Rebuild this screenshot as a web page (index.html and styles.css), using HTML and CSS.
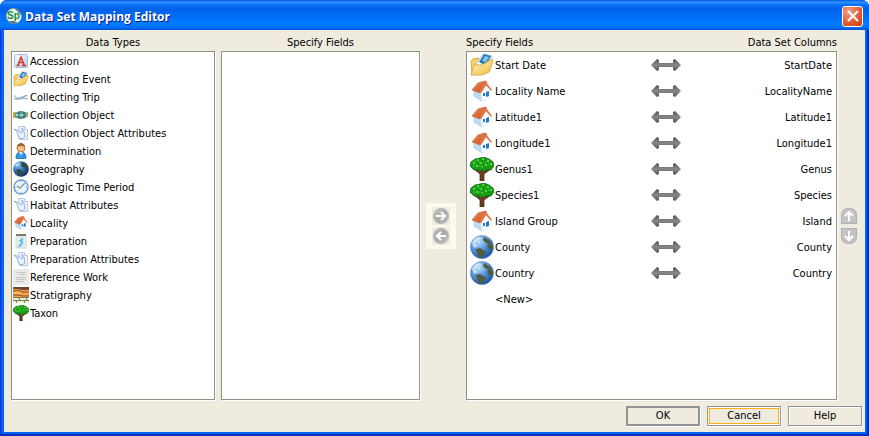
FILE: index.html
```html
<!DOCTYPE html>
<html lang="en">
<head>
<meta charset="utf-8">
<title>Data Set Mapping Editor</title>
<link rel="stylesheet" href="styles.css">
</head>
<body>
<svg class="sprite" aria-hidden="true">
  <defs>
    <linearGradient id="gMetal" x1="0" y1="0" x2="0" y2="1"><stop offset="0" stop-color="#555"/><stop offset=".5" stop-color="#888"/><stop offset="1" stop-color="#555"/></linearGradient>
    <linearGradient id="gRound" x1="0" y1="0" x2="1" y2="1"><stop offset="0" stop-color="#c8c8c8"/><stop offset=".5" stop-color="#aaaaac"/><stop offset="1" stop-color="#bcbcbc"/></linearGradient>
    <linearGradient id="gFolder" x1="0" y1="0" x2="1" y2="1"><stop offset="0" stop-color="#fff6b8"/><stop offset="1" stop-color="#f0bc45"/></linearGradient>
    <linearGradient id="gPage" x1="0" y1="0" x2="1" y2="1"><stop offset="0" stop-color="#fff"/><stop offset="1" stop-color="#aac8f0"/></linearGradient>
    <radialGradient id="gGlobe" cx=".35" cy=".25" r=".8"><stop offset="0" stop-color="#c4e2f8"/><stop offset=".45" stop-color="#5b9be0"/><stop offset="1" stop-color="#184a98"/></radialGradient>
    <radialGradient id="gDark" cx=".3" cy=".25" r=".8"><stop offset="0" stop-color="#8cc0ee"/><stop offset=".5" stop-color="#3272b8"/><stop offset="1" stop-color="#102c5c"/></radialGradient>
    <linearGradient id="gRoof" x1="0" y1="0" x2="1" y2="1"><stop offset="0" stop-color="#ee8a58"/><stop offset="1" stop-color="#c84c1c"/></linearGradient>
  </defs>
  <symbol id="accession" viewBox="0 0 16 16"><rect x="1.500" y="1.500" width="13" height="13" rx="1" fill="url(#gPage)" stroke="#a4c0e8"/><path d="M3.500 12.500h3M9 12.500h4M5 12.200L8 4l3.200 8M6.200 9.500h4" stroke="#d8381c" stroke-width="1.500" fill="none"/></symbol>
  <symbol id="event" viewBox="0 0 24 24"><path d="M1 8l2-2 5-1 3 2v9l-9 5z" fill="#f6cf68" stroke="#d8ac50"/><path d="M6 11l7-10 9 2-5 12-9 3z" fill="#fff" stroke="#9cb0c4" stroke-width=".7"/><path d="M9 9l5-8 7 2-5 10z" fill="#2878b8"/><path d="M12 8l3-5 4 1-3 5z" fill="#7cc8ec"/><path d="M1 22l3-10 8 0 10-6 1 2-4 11-7 3z" fill="url(#gFolder)" stroke="#d8ac50"/></symbol>
  <symbol id="trip" viewBox="0 0 16 16"><path d="M0 7l2-1 3 3 4-1 5-2 1 1-4 2 4 1h-5l-3 1H2l2-2-2-1z" fill="#b4c8e0"/><path d="M1 10l5-1 8-3M8 9l7 1" stroke="#8ea8c6" fill="none"/></symbol>
  <symbol id="object" viewBox="0 0 16 16"><path d="M0 5h3v6H0z" fill="#d4ac48"/><ellipse cx="8" cy="8" rx="6" ry="4" fill="#4c9098"/><path d="M2 7q5-5 10-1l3-1v5l-3-1q-5 4-10 1z" fill="#5a9a8c"/><path d="M3 7h8v2H3z" fill="#9ed8c8"/><path d="M6 5v6M11 5v6" stroke="#284c78"/><path d="M14 5v5" stroke="#d4ac48"/></symbol>
  <symbol id="attrs" viewBox="0 0 16 16"><path d="M5.500 1.500h6l3 3v10h-8z" fill="#eef5ff" stroke="#b8cae4"/><path d="M11.500 1.500v3h3" fill="#fff" stroke="#b8cae4"/><path d="M1 4l3 3 2 6 3 1 3-2-1-6-2-3v5L4 5z" fill="#e8f0fb" stroke="#9ab2d6"/></symbol>
  <symbol id="person" viewBox="0 0 16 16"><path d="M3 15q0-6 5-6t5 6q-5 2-10 0z" fill="#3a96e0" stroke="#1870b8"/><path d="M6 9l2 3 2-3z" fill="#fff"/><circle cx="8" cy="5" r="4" fill="#f8c088" stroke="#b87838"/><path d="M4 4q1-4 4-4t4 4Q8 2 4 4z" fill="#a4602c"/></symbol>
  <symbol id="earth" viewBox="0 0 16 16"><circle cx="8" cy="8" r="7.800" fill="url(#gDark)"/><path d="M9 1l4 2 2 4-2 1-2-2H9l-1-3zM3 9l3-1 4 3-2 4H6l-1-3z" fill="#344838"/><path d="M2 4l3-2 2 1-4 3z" fill="#b8dcf4"/></symbol>
  <symbol id="clock" viewBox="0 0 16 16"><circle cx="8" cy="8" r="7" fill="#e8f4ff" stroke="#6c9ed4" stroke-width="1.400"/><path d="M8 2v1M8 13v1M2 8h1M13 8h1" stroke="#7ca8d8"/><path d="M12 4L7 9 4 7" fill="none" stroke="#7090b8" stroke-width="1.200"/><circle cx="7" cy="9" r="1" fill="#e88c50"/></symbol>
  <symbol id="house" viewBox="0 0 24 24"><path d="M4 11l7 2 6-7 3 5v7l-8 4-8-5z" fill="#bcdcf4" stroke="#a8c8e0" stroke-width=".7"/><path d="M11 14l5-7 5 4v7l-9 4z" fill="#f8fcff"/><path d="M13 14h2v3h-2zM16 13l3-1v5l-3 1z" fill="#2878c0"/><path d="M2 11L8 4l7-2 2 1-7 11z" fill="url(#gRoof)" stroke="#c86838" stroke-width=".7"/><path d="M14 3h2l6 8-1 1-5-6-5 8-2 0z" fill="#e07444"/></symbol>
  <symbol id="jar" viewBox="0 0 16 16"><path d="M3 3h10v12H3z" fill="#e7eeee" stroke="#d4dada"/><path d="M3 1h10v2H3z" fill="#747c74"/><path d="M10 5L6 8l3 1-4 5 3-1 2-4-1-1z" fill="#62c8ec" stroke="#62c4e8"/></symbol>
  <symbol id="paper" viewBox="0 0 16 16"><path d="M0 0h16v16H0z" fill="#eaeaea"/><path d="M3 3.500h2M6 3.500h7M6 5.500h7M3 8.500h10M3 10.500h10M3 12.500h8" stroke="#c6c6c6"/></symbol>
  <symbol id="strata" viewBox="0 0 16 16"><path d="M0 0h16v16H0z" fill="#f3a04c"/><path d="M0 0h16v3H9L5 2H0z" fill="#6c4834"/><path d="M0 4l5-1 4 2h7M0 8h5l5 1h6" stroke="#905028" fill="none"/><path d="M0 10h16v6H0z" fill="#f0eed0"/><path d="M0 10.500h16M0 13.500h16M3.500 13v3M11.500 13v3M6.500 10v3M13.500 10v3" stroke="#708058"/><path d="M0 6h8" stroke="#ffd060"/></symbol>
  <symbol id="tree" viewBox="0 0 24 24"><path d="M4 12l6 5v7h4v-7l7-5-1-1-7 4-1-4-1 4-5-4z" fill="#70401c" stroke="#38200c" stroke-width=".7"/><path d="M0 9l1-4 4-3 5-1 4-1 5 2 4 3 1 4-3 4-4 0-4 1-4-1-5 0z" fill="#189c18" stroke="#075807" stroke-width=".7"/><path d="M3 6h2M7 3h2M12 2h2M17 4h2M10 6h2M15 8h2M20 7h2M6 9h2M12 10h1" stroke="#50d83c" stroke-width="2"/><path d="M5 4h1M9 5h2M15 5h1M18 7h1M3 9h2M9 9h2" stroke="#30b828" stroke-width="2"/></symbol>
  <symbol id="globe" viewBox="0 0 24 24"><circle cx="12" cy="12" r="11.600" fill="url(#gGlobe)" stroke="#6890b8" stroke-width=".6"/><path d="M14 2l6 4 3 6-2 3-3-2-1-3 2-1-4-2-2-2zM6 14l4-1 6 4-4 5-2 1-3-5z" fill="#535c38"/><path d="M2 8q2-5 7-6l3 2-5 1-2 4 3 2-4 2z" fill="#e0f0fa" opacity=".7"/></symbol>
  <symbol id="both" viewBox="0 0 30 14"><path d="M0 7l6-6 2 1v3h14V2l2-1 6 6-6 6-2-1V9H8v3l-2 1z" fill="url(#gMetal)"/></symbol>
  <symbol id="right" viewBox="0 0 18 18"><circle cx="9" cy="9" r="7.700" fill="url(#gRound)" stroke="#b0b0b0" stroke-width=".6"/><path d="M4 9h9M9 5l4 4-4 4" fill="none" stroke="#fff" stroke-width="2"/></symbol>
  <symbol id="up" viewBox="0 0 16 16"><path d="M0 16V8q0-8 8-8t8 8v8z" fill="#b0b0b2"/><path d="M1 15V8q0-7 7-7t7 7v7z" fill="#c4c4c6"/><path d="M8 13V5M4 8l4-4 4 4" fill="none" stroke="#fff" stroke-width="2"/></symbol>
</svg>
<div class="window">
  <header class="titlebar">
    <svg class="logo" viewBox="0 0 16 16" aria-hidden="true"><circle cx="8" cy="8" r="7.700" fill="#eef4ee" stroke="#789888" stroke-width=".7"/><path d="M8 0q8 0 8 8l-3-3zM2 13l5 3 5-1-4-2z" fill="#4c7894"/><text x="1" y="11" class="logo-text">Sp</text></svg>
    <h1>Data Set Mapping Editor</h1>
    <button class="close" aria-label="Close"><svg viewBox="0 0 12 12"><path d="M1 1l10 10M11 1L1 11" stroke="#fff" stroke-width="2"/></svg></button>
  </header>
  <main class="content">
    <div class="panes">
      <section class="pane types">
        <h2>Data Types</h2>
        <ul class="list">
          <li><svg><use href="#accession"/></svg>Accession</li>
          <li><svg><use href="#event"/></svg>Collecting Event</li>
          <li><svg><use href="#trip"/></svg>Collecting Trip</li>
          <li><svg><use href="#object"/></svg>Collection Object</li>
          <li><svg><use href="#attrs"/></svg>Collection Object Attributes</li>
          <li><svg><use href="#person"/></svg>Determination</li>
          <li><svg><use href="#earth"/></svg>Geography</li>
          <li><svg><use href="#clock"/></svg>Geologic Time Period</li>
          <li><svg><use href="#attrs"/></svg>Habitat Attributes</li>
          <li><svg><use href="#house"/></svg>Locality</li>
          <li><svg><use href="#jar"/></svg>Preparation</li>
          <li><svg><use href="#attrs"/></svg>Preparation Attributes</li>
          <li><svg><use href="#paper"/></svg>Reference Work</li>
          <li><svg><use href="#strata"/></svg>Stratigraphy</li>
          <li><svg><use href="#tree"/></svg>Taxon</li>
        </ul>
      </section>
      <section class="pane fields">
        <h2>Specify Fields</h2>
        <ul class="list"></ul>
      </section>
      <div class="movers">
        <button aria-label="Map field"><svg><use href="#right"/></svg></button>
        <button aria-label="Unmap field" class="back"><svg><use href="#right"/></svg></button>
      </div>
      <section class="pane mapping">
        <div class="heads"><h2>Specify Fields</h2><h2>Data Set Columns</h2></div>
        <div class="list">
          <table>
            <colgroup><col class="col-field"><col class="col-arrow"><col></colgroup>
            <tr><td><span><svg><use href="#event"/></svg>Start Date</span></td><td><svg class="both"><use href="#both"/></svg></td><td>StartDate</td></tr>
            <tr><td><span><svg><use href="#house"/></svg>Locality Name</span></td><td><svg class="both"><use href="#both"/></svg></td><td>LocalityName</td></tr>
            <tr><td><span><svg><use href="#house"/></svg>Latitude1</span></td><td><svg class="both"><use href="#both"/></svg></td><td>Latitude1</td></tr>
            <tr><td><span><svg><use href="#house"/></svg>Longitude1</span></td><td><svg class="both"><use href="#both"/></svg></td><td>Longitude1</td></tr>
            <tr><td><span><svg><use href="#tree"/></svg>Genus1</span></td><td><svg class="both"><use href="#both"/></svg></td><td>Genus</td></tr>
            <tr><td><span><svg><use href="#tree"/></svg>Species1</span></td><td><svg class="both"><use href="#both"/></svg></td><td>Species</td></tr>
            <tr><td><span><svg><use href="#house"/></svg>Island Group</span></td><td><svg class="both"><use href="#both"/></svg></td><td>Island</td></tr>
            <tr><td><span><svg><use href="#globe"/></svg>County</span></td><td><svg class="both"><use href="#both"/></svg></td><td>County</td></tr>
            <tr><td><span><svg><use href="#globe"/></svg>Country</span></td><td><svg class="both"><use href="#both"/></svg></td><td>Country</td></tr>
            <tr><td><span><svg></svg>&lt;New&gt;</span></td><td></td><td></td></tr>
          </table>
        </div>
      </section>
      <div class="order">
        <button aria-label="Move up"><svg><use href="#up"/></svg></button>
        <button aria-label="Move down" class="down"><svg><use href="#up"/></svg></button>
      </div>
    </div>
    <footer class="actions">
      <button class="default">OK</button>
      <button class="focused">Cancel</button>
      <button>Help</button>
    </footer>
  </main>
</div>
</body>
</html>
```
FILE: styles.css
```css
* { box-sizing: border-box; }
body {
  margin: 0;
  background: #fff;
  color: #000;
  font: 11px/14px "DejaVu Sans Condensed", "Liberation Sans", sans-serif;
}
button { font: inherit; color: inherit; padding: 0; border: 0; background: none; }
svg { display: block; flex: none; }
h1, h2, ul { margin: 0; padding: 0; font: inherit; }
.sprite { position: absolute; width: 0; height: 0; }

.window {
  display: flex;
  flex-direction: column;
  min-height: 100vh;
  padding: 0 4px 4px;
  background: #0062f0;
  border-radius: 7px 7px 0 0;
  box-shadow: inset 1px 0 #0831d9, inset -2px -2px #0030b8;
}
.titlebar {
  display: flex;
  align-items: center;
  gap: 3px;
  height: 30px;
  margin: 0 -4px;
  padding: 2px 6px 0;
  border-radius: 7px 7px 0 0;
  background: linear-gradient(#0058e0 0, #3090ff 2px, #0870f4 5px, #0060e8 9px, #006cf6 16px, #007cff 24px, #0074fc 27px, #0050d8 30px);
  color: #fff;
}
.titlebar h1 {
  flex: 1;
  font: bold 12px/18px "Open Sans", "Liberation Sans", sans-serif;
  padding-top: 2px;
  text-shadow: 1px 1px #0a1883;
}
.logo { width: 16px; height: 16px; }
.logo-text { font: bold 10px "Liberation Sans", sans-serif; fill: #168c40; }
.close {
  display: grid;
  place-items: center;
  width: 21px;
  height: 21px;
  border: 1px solid #fff;
  border-radius: 3px;
  background: radial-gradient(circle at 30% 25%, #f0a088, #e45c34 55%, #c83810);
}
.close svg { width: 12px; height: 12px; }

.content {
  flex: 1;
  display: flex;
  flex-direction: column;
  gap: 6px;
  padding: 6px 3px 6px 7px;
  background: #efebdf;
}
.panes { flex: 1; display: flex; padding-right: 5px; }
.pane { display: flex; flex-direction: column; gap: 1px; min-width: 0; }
.types { flex: 204 1 0; margin-right: 6px; }
.fields { flex: 199 1 0; }
.mapping { flex: 371 1 0; }
.pane h2 { text-align: center; }
.heads { display: flex; justify-content: space-between; }
.list {
  flex: 1;
  list-style: none;
  background: #fff;
  border: 1px solid #919087;
  box-shadow: 1px 1px #fff;
}
.list li { display: flex; align-items: flex-end; gap: 1px; height: 18px; padding: 0 0 1px 1px; }
.list li svg { width: 16px; height: 16px; }

table { width: 100%; table-layout: fixed; border-collapse: collapse; }
.col-field { width: 49%; }
.col-arrow { width: 9%; }
td { height: 26px; padding: 0; white-space: nowrap; }
td:first-child { padding-left: 3px; }
td:last-child { padding: 2px 4px 0 0; text-align: right; }
td span { display: flex; align-items: flex-end; gap: 1px; line-height: 22px; }
td span svg { width: 24px; height: 24px; }
td .both { width: 30px; height: 14px; margin: 0 0 0 auto; }

.movers {
  align-self: center;
  display: flex;
  flex-direction: column;
  align-items: center;
  justify-content: center;
  gap: 2px;
  width: 30px;
  height: 46px;
  margin: 16px 10px 0 6px;
  background: #fdf9ec;
}
.movers button { background: #efebdf; }
.movers svg { width: 18px; height: 18px; }
.back svg, .down svg { transform: rotate(180deg); }
.order {
  align-self: center;
  display: flex;
  flex-direction: column;
  gap: 4px;
  margin: 16px 0 0 4px;
}
.order svg { width: 16px; height: 16px; }

.actions { display: flex; justify-content: flex-end; gap: 7px; }
.actions button {
  width: 74px;
  height: 20px;
  border: 1px solid #919396;
  box-shadow: inset 1px 1px #fff, 1px 1px #fff;
}
.actions .default { border-width: 2px; box-shadow: 1px 1px #fff; }
.actions .focused { box-shadow: inset 0 0 0 1px #fff, inset 0 0 0 2px #ffb010, 1px 1px #fff; }
```
